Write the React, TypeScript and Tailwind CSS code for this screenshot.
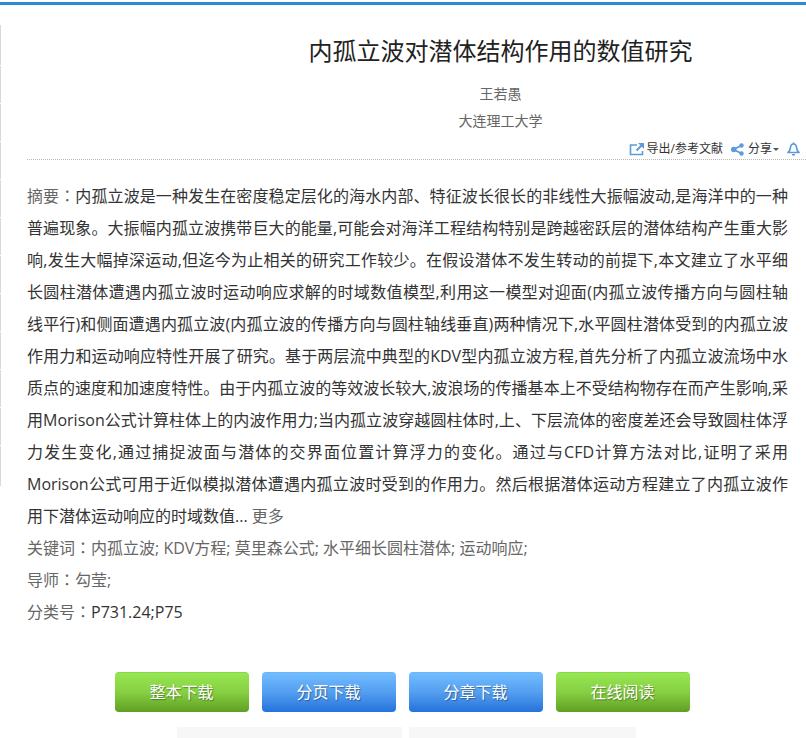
import React from 'react';

const abstractStart =
  '内孤立波是一种发生在密度稳定层化的海水内部、特征波长很长的非线性大振幅波动,是海洋中的一种普遍现象。大振幅内孤立波携带巨大的能量,可能会对海洋工程结构特别是跨越密跃层的潜体结构产生重大影响,发生大幅掉深运动,但迄今为止相关的研究工作较少。在假设潜体不发生转动的前提下,本文建立了水平细长圆柱潜体遭遇内孤立波时运动响应求解的时域数值模型,利用这一模型对迎面(内孤立波传播方向与圆柱轴';

const abstractEnd =
  '和侧面遭遇内孤立波(内孤立波的传播方向与圆柱轴线垂直)两种情况下,水平圆柱潜体受到的内孤立波作用力和运动响应特性开展了研究。基于两层流中典型的KDV型内孤立波方程,首先分析了内孤立波流场中水质点的速度和加速度特性。由于内孤立波的等效波长较大,波浪场的传播基本上不受结构物存在而产生影响,采用Morison公式计算柱体上的内波作用力;当内孤立波穿越圆柱体时,上、下层流体的密度差还会导致圆柱体浮力发生变化,通过捕捉波面与潜体的交界面位置计算浮力的变化。通过与CFD计算方法对比,证明了采用Morison公式可用于近似模拟潜体遭遇内孤立波时受到的作用力。然后根据潜体运动方程建立了内孤立波作用下潜体运动响应的时域数值...';

const keywords = ['内孤立波', 'KDV方程', '莫里森公式', '水平细长圆柱潜体', '运动响应'];

const downloads = [
  { label: '整本下载', color: 'green' },
  { label: '分页下载', color: 'blue' },
  { label: '分章下载', color: 'blue' },
  { label: '在线阅读', color: 'green' }
];

const buttonColors: Record<string, string> = {
  green: 'border-[#8bd648] bg-linear-to-b from-[#97e753] via-[#86cf42] to-[#5f9f22]',
  blue: 'border-[#6bb5fb] bg-linear-to-b from-[#72bdff] via-[#539eef] to-[#2472dc]'
};

function ExportIcon() {
  return (
    <svg width="16" height="14" viewBox="0 0 16 14" fill="none" stroke="#5b9bdb" aria-hidden="true">
      <path d="M8 3H1.5v9.5h12V9" strokeWidth="1.6" />
      <path d="M7.5 8.5l5-5" strokeWidth="2" />
      <path d="M9 1h6v6z" fill="#5b9bdb" stroke="none" />
    </svg>
  );
}

function ShareIcon() {
  return (
    <svg width="13" height="13" viewBox="0 0 13 13" aria-hidden="true">
      <path d="M10.5 2.5l-8 4 8 4" fill="none" stroke="#5b9bdb" strokeWidth="1.8" />
      <g fill="#5b9bdb">
        <circle cx="10.5" cy="2.5" r="2.2" />
        <circle cx="2.7" cy="6.5" r="2.7" />
        <circle cx="10.5" cy="10.5" r="2.2" />
      </g>
    </svg>
  );
}

function BellIcon() {
  return (
    <svg width="13" height="14" viewBox="0 0 13 14" fill="none" stroke="#5b9bdb" aria-hidden="true">
      <path d="M1 10.5c1.6-1.2 2.2-2.4 2.4-4.6C3.6 3.4 4.8 2 6.5 2s2.9 1.4 3.1 3.9c.2 2.2.8 3.4 2.4 4.6z" strokeWidth="1.7" strokeLinejoin="round" />
      <path d="M6.5 2V.5M5 12.7h3" strokeWidth="1.6" />
    </svg>
  );
}

function Label({ children }: { children: React.ReactNode }) {
  return (
    <span className="text-[#666]">
      {children}
      <span className="leading-none font-['Noto_Sans_CJK_TC',sans-serif]" lang="zh-TW">：</span>
    </span>
  );
}

export default function App() {
  return (
    <div
      lang="zh-CN"
      className="overflow-hidden bg-white pt-0.5 text-[#333] font-['Open_Sans','Noto_Sans_CJK_SC',sans-serif]"
    >
      <div className="h-[3px] bg-[#2f8ad8]" />

      <div className="mt-5 flex items-start">
        <div className="flex w-px shrink-0 flex-col gap-px">
          {Array.from({ length: 12 }, (_, i) => (
            <div key={i} className="h-[37px] bg-[#d9d9d9] first:h-10 last:h-10" />
          ))}
        </div>

        <main className="min-w-0 flex-1 pl-[26px]">
          <header className="border-b border-dotted border-[#b8b8b8]">
            <div className="pl-[168px] pt-2 text-center">
              <h1 className="text-2xl leading-9 text-[#222]">内孤立波对潜体结构作用的数值研究</h1>
              <p className="mt-[11px] text-sm leading-[27px] text-[#666]">王若愚</p>
              <p className="text-sm leading-[27px] text-[#666]">大连理工大学</p>
            </div>
            <div className="mt-[5px] flex items-center justify-end gap-2 pr-1.5 text-xs leading-5">
              <a href="#export" className="flex items-center gap-0.5">
                <ExportIcon />
                导出/参考文献
              </a>
              <button type="button" className="flex items-center gap-1">
                <ShareIcon />
                <span className="flex items-center">
                  分享
                  <span className="ml-px border-x-[3px] border-t-[3px] border-x-transparent border-t-[#555]" />
                </span>
              </button>
              <button type="button" aria-label="bell">
                <BellIcon />
              </button>
            </div>
          </header>

          <section className="mt-5 pr-[18px] leading-8">
            <p className="text-justify">
              <Label>摘要</Label>
              {abstractStart}
              <span className="whitespace-nowrap">线平行)</span>
              {abstractEnd}{' '}
              <a href="#more" className="text-[#666]">更多</a>
            </p>
            <p className="text-[#666]">
              <Label>关键词</Label>
              {keywords.map((word) => word + ';').join(' ')}
            </p>
            <p className="text-[#666]">
              <Label>导师</Label>
              勾莹;
            </p>
            <p>
              <Label>分类号</Label>
              P731.24;P75
            </p>
          </section>
        </main>
      </div>

      <div className="mt-11 flex justify-center gap-[13px] pr-0.5">
        {downloads.map((item) => (
          <button
            key={item.label}
            type="button"
            className={`h-10 w-[134px] rounded border-t pb-0.5 text-base text-white text-shadow-[1px_1px_1px_rgb(0_0_0/0.35)] ${buttonColors[item.color]}`}
          >
            {item.label}
          </button>
        ))}
      </div>

      <div className="mt-[15px] flex justify-center gap-[7px] pl-1.5">
        <div className="h-[11px] w-[225px] bg-[#f7f7f7]" />
        <div className="h-[11px] w-[227px] bg-[#f7f7f7]" />
      </div>
    </div>
  );
}
